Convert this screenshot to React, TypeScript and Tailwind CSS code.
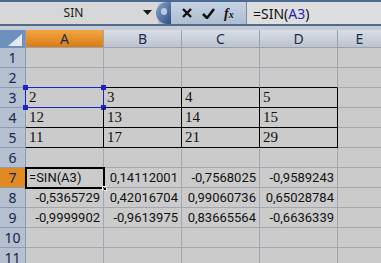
import React from "react";

const cols = ["A", "B", "C", "D"];

type Cell = { v: string; align?: "l" | "r"; serif?: boolean };

const data: Record<number, Cell[]> = {
    3: [{ v: "2", serif: true }, { v: "3", serif: true }, { v: "4", serif: true }, { v: "5", serif: true }],
    4: [{ v: "12", serif: true }, { v: "13", serif: true }, { v: "14", serif: true }, { v: "15", serif: true }],
    5: [{ v: "11", serif: true }, { v: "17", serif: true }, { v: "21", serif: true }, { v: "29", serif: true }],
    7: [{ v: "=SIN(A3)", align: "l" }, { v: "0,14112001", align: "r" }, { v: "-0,7568025", align: "r" }, { v: "-0,9589243", align: "r" }],
    8: [{ v: "-0,5365729", align: "r" }, { v: "0,42016704", align: "r" }, { v: "0,99060736", align: "r" }, { v: "0,65028784", align: "r" }],
    9: [{ v: "-0,9999902", align: "r" }, { v: "-0,9613975", align: "r" }, { v: "0,83665564", align: "r" }, { v: "-0,6636339", align: "r" }],
};

function Handle({ pos }: { pos: string }) {
    return <div className={`absolute h-[5px] w-[5px] bg-[#1c24c8] ${pos}`} />;
}

function Row({ n }: { n: number }) {
    const cells = data[n];
    const boxed = n >= 3 && n <= 5;
    return (
        <div className="flex h-[20px] shrink-0">
            <div
                className={`flex w-[26px] shrink-0 items-center justify-center border-b border-r border-[#8e9bb0] text-[14px] text-[#16264a] ${
                    n === 7 ? "bg-[#e18a22]" : "bg-[#b4c0d0]"
                }`}
                style={{ fontFamily: "'Noto Sans', sans-serif" }}
            >
                {n}
            </div>
            {cols.map((c, i) => {
                const cell = cells?.[i];
                const bc = boxed ? "border-black" : "border-[#a3a8b0]";
                const topBlack = n === 2 ? "border-b-black" : "";
                return (
                    <div
                        key={c}
                        className={`relative flex w-[78px] shrink-0 items-center overflow-visible whitespace-nowrap border-b border-r px-[3px] ${bc} ${topBlack} ${
                            cell?.align === "r" ? "justify-end" : "justify-start"
                        }`}
                    >
                        {cell && (
                            <span
                                className={cell.serif ? "text-[15px] leading-none text-[#111]" : "text-[13px] leading-none text-[#111]"}
                                style={{
                                    fontFamily: cell.serif ? "'Liberation Serif', serif" : "Roboto, 'Liberation Sans', sans-serif",
                                }}
                            >
                                {cell.v}
                            </span>
                        )}
                        {n === 3 && i === 0 && (
                            <div className="absolute -left-[1px] -top-[1px] h-[21px] w-[79px] border border-[#1c24c8]">
                                <Handle pos="-left-[3px] -top-[3px]" />
                                <Handle pos="-right-[3px] -top-[3px]" />
                                <Handle pos="-left-[3px] -bottom-[3px]" />
                                <Handle pos="-right-[3px] -bottom-[3px]" />
                            </div>
                        )}
                        {n === 7 && i === 0 && (
                            <div className="absolute -left-[1px] -top-[1px] h-[22px] w-[80px] border-2 border-black">
                                <div className="absolute -bottom-[4px] -right-[4px] h-[5px] w-[5px] border border-white bg-black" />
                            </div>
                        )}
                    </div>
                );
            })}
            <div className="flex-1 border-b border-[#a3a8b0]" />
        </div>
    );
}

export default function App() {
    const rows = Array.from({ length: 11 }, (_, i) => i + 1);
    return (
        <div className="flex h-[263px] w-[381px] flex-col overflow-hidden bg-[#cbcbcb]">
            {/* formula bar */}
            <div className="h-[2px] shrink-0 bg-[#4a6a94]" />
            <div className="flex h-[22px] shrink-0 items-stretch bg-[#d7d7d7]" style={{ fontFamily: "'Noto Sans', sans-serif" }}>
                <div className="flex w-[158px] shrink-0 items-center">
                    <span className="flex-1 pl-[4px] text-center text-[12px] text-[#1a1a1a]">SIN</span>
                    <svg width="9" height="6" viewBox="0 0 9 6" className="mr-[6px]">
                        <path d="M0 0 H9 L4.5 5 Z" fill="#1a1a1a" />
                    </svg>
                </div>
                <div className="relative flex w-[88px] shrink-0 items-center bg-gradient-to-b from-[#c6d2e2] to-[#aebdd2]">
                    <div className="absolute -left-[2px] top-[0px] h-[22px] w-[15px] rounded-l-full bg-gradient-to-br from-[#8aa6cc] to-[#2e4f84]">
                        <div className="absolute left-[5px] top-[6px] h-[7px] w-[6px] rounded-full bg-[#bcc8d8]" />
                    </div>
                    <svg width="10" height="10" viewBox="0 0 10 10" className="ml-[24px]">
                        <path d="M1 1 L9 9 M9 1 L1 9" stroke="#111" strokeWidth="2.4" />
                    </svg>
                    <svg width="13" height="11" viewBox="0 0 13 11" className="ml-[10px]">
                        <path d="M1 6 L5 10 L12 1" stroke="#111" strokeWidth="2.6" fill="none" />
                    </svg>
                    <span
                        className="ml-[9px] text-[14px] font-bold italic text-[#111]"
                        style={{ fontFamily: "'Liberation Serif', serif" }}
                    >
                        f<span className="text-[10px]">x</span>
                    </span>
                </div>
                <div className="flex flex-1 items-center border-l border-[#7a8aa0] bg-[#dedede] pl-[6px] text-[14px] text-[#111]">
                    =SIN(<span className="text-[#2424b0]">A3</span>)
                </div>
            </div>
            <div className="h-[2px] shrink-0 bg-[#566a86]" />
            <div className="h-[4px] shrink-0 bg-[#c4ccd8]" />
            {/* column headers */}
            <div className="flex h-[18px] shrink-0 text-[14px] text-[#1c2c4c]" style={{ fontFamily: "'Noto Sans', sans-serif" }}>
                <div className="relative w-[26px] shrink-0 border-r border-[#8e9bb0] bg-[#6f8fbc]">
                    <svg width="14" height="12" viewBox="0 0 14 12" className="absolute bottom-[2px] right-[3px]">
                        <path d="M14 0 L14 12 L0 12 Z" fill="#e4e9f0" />
                    </svg>
                </div>
                {cols.map((c) => (
                    <div
                        key={c}
                        className={`flex w-[78px] shrink-0 items-center justify-center border-b border-r border-[#98a2b2] ${
                            c === "A" ? "bg-gradient-to-b from-[#f2a640] to-[#d97c14]" : "bg-gradient-to-b from-[#d8dde6] to-[#bcc4cf]"
                        }`}
                    >
                        {c}
                    </div>
                ))}
                <div className="flex flex-1 items-center justify-center border-b border-[#98a2b2] bg-gradient-to-b from-[#d8dde6] to-[#bcc4cf]">
                    E
                </div>
            </div>
            {rows.map((n) => (
                <Row key={n} n={n} />
            ))}
        </div>
    );
}
